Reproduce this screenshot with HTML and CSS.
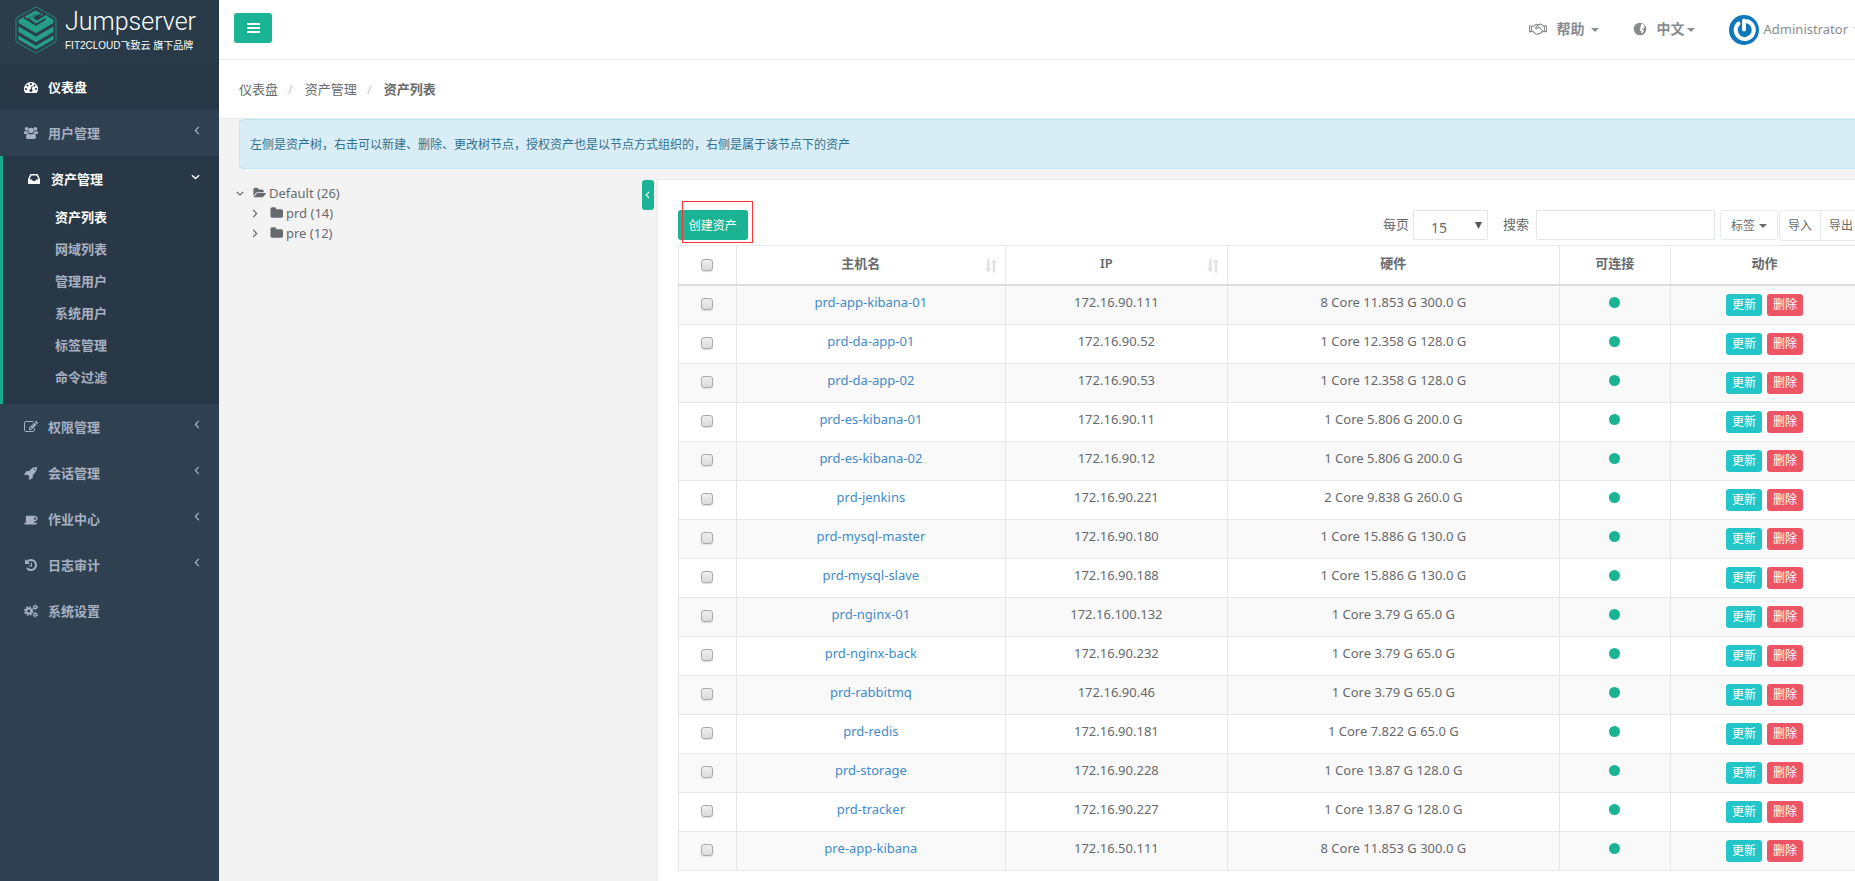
FILE: index.html
```html
<!DOCTYPE html>
<html lang="zh-CN">
<head>
<meta charset="utf-8">
<title>Jumpserver</title>
<link rel="stylesheet" href="styles.css">
</head>
<body>
<svg class="sprite" aria-hidden="true">
  <symbol id="i-dash" viewBox="0 0 1792 1792"><path d="M384 1152q0-53-37.500-90.500t-90.500-37.500-90.500 37.500-37.500 90.500 37.500 90.500 90.500 37.500 90.500-37.500 37.500-90.500zm192-448q0-53-37.500-90.500t-90.500-37.500-90.500 37.500-37.500 90.500 37.500 90.500 90.500 37.500 90.500-37.500 37.500-90.500zm428 481l101-382q6-26-7.500-48.500t-38.500-29.500-48 6.500-30 39.500l-101 382q-60 5-107 43.500t-63 98.500q-20 77 20 146t117 89 146-20 89-117q16-60-6-117t-72-91zm660-33q0-53-37.500-90.500t-90.500-37.500-90.500 37.500-37.500 90.500 37.500 90.500 90.500 37.500 90.500-37.500 37.500-90.500zm-640-640q0-53-37.500-90.500t-90.500-37.500-90.500 37.500-37.500 90.500 37.500 90.500 90.500 37.500 90.500-37.500 37.500-90.500zm448 192q0-53-37.500-90.500t-90.500-37.500-90.500 37.500-37.500 90.500 37.500 90.500 90.500 37.500 90.500-37.500 37.500-90.500zm320 448q0 261-141 483-19 29-54 29h-1402q-35 0-54-29-141-221-141-483 0-182 71-348t191-286 286-191 348-71 348 71 286 191 191 286 71 348z"/></symbol>
  <symbol id="i-users" viewBox="0 0 14 14"><circle cx="2.700" cy="2.800" r="1.900"/><circle cx="11.300" cy="2.800" r="1.900"/><circle cx="7" cy="4.400" r="2.700"/><path d="M0 7.200C0 5.600.7 5 1.400 5c.9.600 1.600.6 2.400.3.100 1 .4 1.500.7 1.900-.9 0-1.600.3-2.100.9H1.200C.4 8.100 0 7.700 0 7.200zM14 7.200c0-1.600-.7-2.200-1.400-2.200-.9.600-1.600.6-2.400.3-.1 1-.4 1.500-.7 1.900.9 0 1.600.3 2.100.9h1.200c.8 0 1.200-.4 1.200-.9zM2 11.200c0-2.500.8-3.800 2.400-3.800 1.700 1.200 3.500 1.200 5.200 0 1.600 0 2.400 1.300 2.400 3.800 0 1.200-.8 1.800-1.800 1.800H3.800C2.800 13 2 12.400 2 11.200z"/></symbol>
  <symbol id="i-inbox" viewBox="0 0 1536 1792"><path d="M1023 960h316q-1-3-2.500-8.500t-2.500-7.500l-212-496h-708l-212 496q-1 3-2.500 8.500t-2.500 7.500h316l95 192h320zm513 30v482q0 26-19 45t-45 19h-1408q-26 0-45-19t-19-45v-482q0-62 25-123l238-552q10-25 36.500-42t52.500-17h832q26 0 52.500 17t36.500 42l238 552q25 61 25 123z"/></symbol>
  <symbol id="i-edit" viewBox="0 0 1792 1792"><path d="M888 1184l116-116-152-152-116 116v56h96v96h56zm440-720q-16-16-33 1l-350 350q-17 17-1 33t33-1l350-350q17-17 1-33zm80 594v190q0 119-84.500 203.500t-203.500 84.500h-832q-119 0-203.500-84.500t-84.500-203.500v-832q0-119 84.500-203.500t203.500-84.500h832q63 0 117 25 15 7 18 23 3 17-9 29l-49 49q-14 14-32 8-23-6-45-6h-832q-66 0-113 47t-47 113v832q0 66 47 113t113 47h832q66 0 113-47t47-113v-126q0-13 9-22l64-64q15-15 35-7t20 29zm-96-738l288 288-672 672h-288v-288zm444 132l-92 92-288-288 92-92q28-28 68-28t68 28l152 152q28 28 28 68t-28 68z"/></symbol>
  <symbol id="i-rocket" viewBox="0 0 1792 1792"><path d="M1440 448q0-40-28-68t-68-28-68 28-28 68 28 68 68 28 68-28 28-68zm224-288q0 249-75.500 430.500t-253.500 360.500q-81 80-195 176l-20 379q-2 16-16 26l-384 224q-7 4-16 4-12 0-23-9l-64-64q-13-14-8-32l85-276-281-281-276 85q-3 1-9 1-14 0-23-9l-64-64q-17-19-5-39l224-384q10-14 26-16l379-20q96-114 176-195 188-187 358-258t431-71q14 0 24 9.500t10 22.500z"/></symbol>
  <symbol id="i-coffee" viewBox="0 0 1920 1792"><path d="M1664 832q0-80-56-136t-136-56h-64v384h64q80 0 136-56t56-136zm-1664 576h1792q0 106-75 181t-181 75h-1280q-106 0-181-75t-75-181zm1856-576q0 159-112.500 271.500t-271.500 112.500h-64v32q0 92-66 158t-158 66h-704q-92 0-158-66t-66-158v-736q0-26 19-45t45-19h1152q159 0 271.500 112.500t112.500 271.500z"/></symbol>
  <symbol id="i-history" viewBox="128 0 1536 1792"><path d="M1664 896q0 156-61 298t-164 245-245 164-298 61q-172 0-327-72.500t-264-204.500q-7-10-6.500-22.500t8.500-20.500l137-138q10-9 25-9 16 2 23 12 73 95 179 147t225 52q104 0 198.500-40.500t163.500-109.500 109.500-163.500 40.500-198.500-40.500-198.500-109.500-163.500-163.500-109.500-198.500-40.500q-98 0-188 35.500t-160 101.500l137 138q31 30 14 69-17 40-59 40h-448q-26 0-45-19t-19-45v-448q0-42 40-59 39-17 69 14l130 129q107-101 244.500-156.500t284.500-55.500q156 0 298 61t245 164 164 245 61 298zm-640-288v448q0 14-9 23t-23 9h-320q-14 0-23-9t-9-23v-64q0-14 9-23t23-9h224v-352q0-14 9-23t23-9h64q14 0 23 9t9 23z"/></symbol>
  <symbol id="i-cogs" viewBox="0 0 14 14"><g fill="none" stroke="currentColor"><circle cx="4.800" cy="7" r="2.600" stroke-width="2"/><circle cx="4.800" cy="7" r="4.100" stroke-width="1.400" stroke-dasharray="1.800 1.420"/><circle cx="11.300" cy="3.200" r="1.400" stroke-width="1.200"/><circle cx="11.300" cy="3.200" r="2.200" stroke-width=".9" stroke-dasharray="1.300 1"/><circle cx="11.300" cy="10.800" r="1.400" stroke-width="1.200"/><circle cx="11.300" cy="10.800" r="2.200" stroke-width=".9" stroke-dasharray="1.300 1"/></g></symbol>
  <symbol id="i-left" viewBox="0 0 6 10"><path d="M5 1 1.200 5 5 9" fill="none" stroke="currentColor" stroke-width="1.400"/></symbol>
  <symbol id="i-right" viewBox="0 0 6 10"><path d="M1 1l3.800 4L1 9" fill="none" stroke="currentColor" stroke-width="1.400"/></symbol>
  <symbol id="i-down" viewBox="0 0 10 6"><path d="M1 1l4 3.800L9 1" fill="none" stroke="currentColor" stroke-width="1.600"/></symbol>
  <symbol id="i-folder" viewBox="0 128 1728 1536"><path d="M1728 608v704q0 92-66 158t-158 66h-1216q-92 0-158-66t-66-158v-960q0-92 66-158t158-66h320q92 0 158 66t66 158v32h672q92 0 158 66t66 158z"/></symbol>
  <symbol id="i-open" viewBox="0 128 1943 1536"><path d="M1943 952q0 31-31 66l-336 396q-43 51-120.500 86.500t-143.500 35.500h-1088q-34 0-60.500-13t-26.500-43q0-31 31-66l336-396q43-51 120.500-86.500t143.500-35.500h1088q34 0 60.500 13t26.500 43zm-343-344v160h-832q-94 0-197 47.500t-164 119.500l-337 396-5 6q0-4-.5-12.500t-.5-12.500v-960q0-92 66-158t158-66h320q92 0 158 66t66 158v32h544q92 0 158 66t66 158z"/></symbol>
  <symbol id="i-sort" viewBox="0 0 12 14"><path d="M2 0h2.600v9.500h1.900L3.300 13.500 0 9.500h2zM7.600 13.500h2.600V4H12L8.900 0 5.800 4h1.800z"/></symbol>
  <symbol id="i-globe" viewBox="0 0 14 14"><circle cx="7" cy="7" r="6.300"/><path fill="#fff" d="M8.200 2.200l1.600-.4 1.800 1.600-.6 1.300.9 1-1.200.7-1.100-.2-.7 1 1.600.5.300 1.300-1.700 2.200-.9-.2-.2-1.800-1.300-1.500.6-1.600z"/></symbol>
  <symbol id="i-hand" viewBox="0 0 18 12"><g fill="none" stroke="currentColor" stroke-width="1.100"><path d="M.6 3h2v5.600h-2zM17.400 3h-2v5.600h2zM2.600 3.300l2.200-.2C6 1.500 7 1 8.300 1.400L9.500 2C11.500.6 13 1 14 2.900l1.400.3M2.600 8.300h1.200l3 2.600c1 .7 1.900.4 2.300-.3 1.100.6 1.900.2 2.200-.7 1 .2 1.700-.5 1.600-1.400l2.500-.2M9.500 2C8 2.700 7 3.800 6.500 5c.7 1.200 2 .8 3-.8l1.200.2 2.600 3.300c.3.500.2.900-.1 1.200"/></g></symbol>
</svg>
<div class="page">
  <nav class="sidebar">
    <div class="brand">
      <svg class="brand-mark" viewBox="0 0 42 48"><path d="M21 .8 41 12.300v23.400L21 47.200 1 35.700V12.300z" fill="none" stroke="#249c83" stroke-width=".8"/><g fill="#269d84"><path d="M20.500 4.500 28 8.300l-3 2.200-4.500-2.300-8 4.600 8.500 5 9-5.300-2.500-1.500 3.500-2L38.500 14v3L21 27.300 3.500 17v-3z"/><path d="M14 12.600l6.800-3.800 2.400 1.300-4 2.600 2.800 1.800 6-3.400 2.200 1.300L21 17.300z"/><path d="M3.500 20.500 21 30.600l17.500-10.100v5.600L21 36.200 3.500 26.100z"/><path d="M3.500 29.600 21 39.700l17.500-10.100v3.900L21 43.600 3.500 33.500z"/></g><path d="M9 11.500l12 7.200 9.500-5.600M18.500 12.200l7.500-4" fill="none" stroke="#293846" stroke-width="1.600"/></svg>
      <div class="brand-text"><span class="brand-name">Jumpserver</span><span class="brand-tag">FIT2CLOUD飞致云 旗下品牌</span></div>
    </div>
    <ul class="menu">
      <li class="landing"><a href="#"><svg class="mi"><use href="#i-dash"/></svg><span>仪表盘</span></a></li>
      <li><a href="#"><svg class="mi"><use href="#i-users"/></svg><span>用户管理</span><svg class="arrow"><use href="#i-left"/></svg></a></li>
      <li class="active"><a href="#"><svg class="mi"><use href="#i-inbox"/></svg><span>资产管理</span><svg class="arrow wide"><use href="#i-down"/></svg></a>
        <ul class="submenu">
          <li><a class="current" href="#">资产列表</a></li>
          <li><a href="#">网域列表</a></li>
          <li><a href="#">管理用户</a></li>
          <li><a href="#">系统用户</a></li>
          <li><a href="#">标签管理</a></li>
          <li><a href="#">命令过滤</a></li>
        </ul>
      </li>
      <li><a href="#"><svg class="mi"><use href="#i-edit"/></svg><span>权限管理</span><svg class="arrow"><use href="#i-left"/></svg></a></li>
      <li><a href="#"><svg class="mi"><use href="#i-rocket"/></svg><span>会话管理</span><svg class="arrow"><use href="#i-left"/></svg></a></li>
      <li><a href="#"><svg class="mi"><use href="#i-coffee"/></svg><span>作业中心</span><svg class="arrow"><use href="#i-left"/></svg></a></li>
      <li><a href="#"><svg class="mi"><use href="#i-history"/></svg><span>日志审计</span><svg class="arrow"><use href="#i-left"/></svg></a></li>
      <li><a href="#"><svg class="mi"><use href="#i-cogs"/></svg><span>系统设置</span></a></li>
    </ul>
  </nav>
  <div class="main">
    <header class="topbar">
      <button class="burger" type="button" aria-label="菜单"><svg viewBox="0 0 13 11"><path d="M0 0h13v2H0zM0 4h13v2H0zM0 8h13v2H0z"/></svg></button>
      <div class="top-links">
        <a class="help" href="#"><svg class="hand"><use href="#i-hand"/></svg><b>帮助</b><i class="caret"></i></a>
        <a class="lang" href="#"><svg class="globe"><use href="#i-globe"/></svg><b>中文</b><i class="caret"></i></a>
        <a class="user" href="#"><svg class="avatar" viewBox="0 0 30 30"><circle cx="15" cy="15" r="15" fill="#0f78bd"/><path d="M9.500 8.500a9 9 0 1 0 8.500-2.200" fill="none" stroke="#fff" stroke-width="4" stroke-linecap="round"/><path d="M15 5.500v9" stroke="#fff" stroke-width="4" stroke-linecap="round"/></svg><span>Administrator</span><i class="caret"></i></a>
      </div>
    </header>
    <ol class="crumbs"><li><a href="#">仪表盘</a></li><li><a href="#">资产管理</a></li><li><b>资产列表</b></li></ol>
    <div class="content">
      <div class="alert">左侧是资产树，右击可以新建、删除、更改树节点，授权资产也是以节点方式组织的，右侧是属于该节点下的资产</div>
      <div class="split">
        <div class="tree">
          <div class="node"><svg class="tw down"><use href="#i-down"/></svg><svg class="fo"><use href="#i-open"/></svg><span>Default (26)</span></div>
          <div class="node child"><svg class="tw"><use href="#i-right"/></svg><svg class="fo"><use href="#i-folder"/></svg><span>prd (14)</span></div>
          <div class="node child"><svg class="tw"><use href="#i-right"/></svg><svg class="fo"><use href="#i-folder"/></svg><span>pre (12)</span></div>
        </div>
        <button class="fold" type="button" aria-label="收起"><svg><use href="#i-left"/></svg></button>
        <section class="panel">
          <div class="tools">
            <div class="create-wrap"><button class="create" type="button">创建资产</button></div>
            <label class="per" for="per">每页</label>
            <select id="per"><option>15</option></select>
            <label class="find" for="find">搜索</label>
            <input id="find" type="text">
            <button class="plain tag" type="button">标签<i class="caret"></i></button>
            <div class="group"><button class="plain" type="button">导入</button><button class="plain" type="button">导出</button></div>
          </div>
          <table>
            <colgroup><col class="c1"><col class="c2"><col class="c3"><col class="c4"><col class="c5"><col class="c6"></colgroup>
            <thead><tr><th><input type="checkbox" aria-label="全选"></th><th><div class="sortable"><span>主机名</span><svg><use href="#i-sort"/></svg></div></th><th><div class="sortable"><span>IP</span><svg><use href="#i-sort"/></svg></div></th><th>硬件</th><th>可连接</th><th>动作</th></tr></thead>
            <tbody>
<tr><td><input type="checkbox" aria-label="选择"></td><td><a href="#">prd-app-kibana-01</a></td><td>172.16.90.111</td><td>8 Core 11.853 G 300.0 G</td><td><i class="dot"></i></td><td><div class="acts"><button class="upd" type="button">更新</button><button class="del" type="button">删除</button></div></td></tr>
<tr><td><input type="checkbox" aria-label="选择"></td><td><a href="#">prd-da-app-01</a></td><td>172.16.90.52</td><td>1 Core 12.358 G 128.0 G</td><td><i class="dot"></i></td><td><div class="acts"><button class="upd" type="button">更新</button><button class="del" type="button">删除</button></div></td></tr>
<tr><td><input type="checkbox" aria-label="选择"></td><td><a href="#">prd-da-app-02</a></td><td>172.16.90.53</td><td>1 Core 12.358 G 128.0 G</td><td><i class="dot"></i></td><td><div class="acts"><button class="upd" type="button">更新</button><button class="del" type="button">删除</button></div></td></tr>
<tr><td><input type="checkbox" aria-label="选择"></td><td><a href="#">prd-es-kibana-01</a></td><td>172.16.90.11</td><td>1 Core 5.806 G 200.0 G</td><td><i class="dot"></i></td><td><div class="acts"><button class="upd" type="button">更新</button><button class="del" type="button">删除</button></div></td></tr>
<tr><td><input type="checkbox" aria-label="选择"></td><td><a href="#">prd-es-kibana-02</a></td><td>172.16.90.12</td><td>1 Core 5.806 G 200.0 G</td><td><i class="dot"></i></td><td><div class="acts"><button class="upd" type="button">更新</button><button class="del" type="button">删除</button></div></td></tr>
<tr><td><input type="checkbox" aria-label="选择"></td><td><a href="#">prd-jenkins</a></td><td>172.16.90.221</td><td>2 Core 9.838 G 260.0 G</td><td><i class="dot"></i></td><td><div class="acts"><button class="upd" type="button">更新</button><button class="del" type="button">删除</button></div></td></tr>
<tr><td><input type="checkbox" aria-label="选择"></td><td><a href="#">prd-mysql-master</a></td><td>172.16.90.180</td><td>1 Core 15.886 G 130.0 G</td><td><i class="dot"></i></td><td><div class="acts"><button class="upd" type="button">更新</button><button class="del" type="button">删除</button></div></td></tr>
<tr><td><input type="checkbox" aria-label="选择"></td><td><a href="#">prd-mysql-slave</a></td><td>172.16.90.188</td><td>1 Core 15.886 G 130.0 G</td><td><i class="dot"></i></td><td><div class="acts"><button class="upd" type="button">更新</button><button class="del" type="button">删除</button></div></td></tr>
<tr><td><input type="checkbox" aria-label="选择"></td><td><a href="#">prd-nginx-01</a></td><td>172.16.100.132</td><td>1 Core 3.79 G 65.0 G</td><td><i class="dot"></i></td><td><div class="acts"><button class="upd" type="button">更新</button><button class="del" type="button">删除</button></div></td></tr>
<tr><td><input type="checkbox" aria-label="选择"></td><td><a href="#">prd-nginx-back</a></td><td>172.16.90.232</td><td>1 Core 3.79 G 65.0 G</td><td><i class="dot"></i></td><td><div class="acts"><button class="upd" type="button">更新</button><button class="del" type="button">删除</button></div></td></tr>
<tr><td><input type="checkbox" aria-label="选择"></td><td><a href="#">prd-rabbitmq</a></td><td>172.16.90.46</td><td>1 Core 3.79 G 65.0 G</td><td><i class="dot"></i></td><td><div class="acts"><button class="upd" type="button">更新</button><button class="del" type="button">删除</button></div></td></tr>
<tr><td><input type="checkbox" aria-label="选择"></td><td><a href="#">prd-redis</a></td><td>172.16.90.181</td><td>1 Core 7.822 G 65.0 G</td><td><i class="dot"></i></td><td><div class="acts"><button class="upd" type="button">更新</button><button class="del" type="button">删除</button></div></td></tr>
<tr><td><input type="checkbox" aria-label="选择"></td><td><a href="#">prd-storage</a></td><td>172.16.90.228</td><td>1 Core 13.87 G 128.0 G</td><td><i class="dot"></i></td><td><div class="acts"><button class="upd" type="button">更新</button><button class="del" type="button">删除</button></div></td></tr>
<tr><td><input type="checkbox" aria-label="选择"></td><td><a href="#">prd-tracker</a></td><td>172.16.90.227</td><td>1 Core 13.87 G 128.0 G</td><td><i class="dot"></i></td><td><div class="acts"><button class="upd" type="button">更新</button><button class="del" type="button">删除</button></div></td></tr>
<tr><td><input type="checkbox" aria-label="选择"></td><td><a href="#">pre-app-kibana</a></td><td>172.16.50.111</td><td>8 Core 11.853 G 300.0 G</td><td><i class="dot"></i></td><td><div class="acts"><button class="upd" type="button">更新</button><button class="del" type="button">删除</button></div></td></tr>
            </tbody>
          </table>
        </section>
      </div>
    </div>
  </div>
</div>
</body>
</html>
```
FILE: styles.css
```css
* { box-sizing: border-box; }
body {
  margin: 0;
  font: 13px/18px "Noto Sans", "Noto Sans CJK SC", sans-serif;
  color: #676a6c;
  background: #f3f3f4;
}
a { color: inherit; text-decoration: none; }
ul, ol { list-style: none; margin: 0; padding: 0; }
button, input, select { font: inherit; color: inherit; margin: 0; }
svg { fill: currentColor; flex: none; display: block; }
.sprite { position: absolute; width: 0; height: 0; }
.page { display: flex; min-height: 100vh; overflow: hidden; }

.sidebar { flex: none; width: 219px; background: #2f4050; color: #a7b1c2; font-weight: 600; }
.brand {
  display: flex; gap: 8px; height: 64px; padding: 6px 0 0 15px; color: #fff;
  background: linear-gradient(120deg, #2b3c4b 0 40%, #283a48 60% 100%);
}
.brand-mark { width: 42px; height: 48px; }
.brand-text { display: flex; flex-direction: column; white-space: nowrap; }
.brand-name { font: 300 25px/32px Roboto, sans-serif; }
.brand-tag { font: 400 10px/16px "Liberation Sans", "Noto Sans CJK SC", sans-serif; }
.menu > li > a { display: flex; align-items: center; height: 46px; padding: 0 19px 1px 24px; }
.mi { width: 14px; height: 14px; margin-right: 10px; }
.arrow { width: 6px; height: 9px; margin: 0 0 4px auto; }
.arrow.wide { width: 9px; height: 6px; }
.landing, .active { background: #293846; }
.landing > a, .active > a, .current { color: #fff; }
.menu > .active { border-left: 3px solid #19aa8d; }
.submenu { padding: 0 0 10px; }
.submenu a { display: block; padding: 6px 0 8px 52px; }

.main { flex: 1; display: flex; flex-direction: column; min-width: 0; margin-right: -45px; }
.topbar {
  display: flex; justify-content: space-between; align-items: flex-start;
  height: 60px; padding: 13px 38px 0 15px; background: #fff; border-bottom: 1px solid #e7eaec;
}
.burger { width: 38px; height: 30px; padding: 0 0 0 13px; border: 0; border-radius: 3px; background: #1ab394; color: #fff; }
.burger svg { width: 13px; height: 11px; }
.top-links { display: flex; font-size: 14px; color: #888b8e; }
.top-links a { display: flex; align-items: center; height: 34px; margin-top: -1px; }
.top-links b { font-weight: 600; }
.hand { width: 18px; height: 12px; margin-right: 10px; }
.globe { width: 14px; height: 14px; margin-right: 10px; }
.caret { width: 0; height: 0; border: 4px solid transparent; border-top-color: currentColor; border-bottom: 0; }
.help .caret { margin: 2px 0 0 6px; }
.lang { margin: 0 34px; }
.lang .caret { margin: 2px 0 0 2px; }
.avatar { width: 30px; height: 30px; margin: 2px 5px 0 0; }
.user { font-size: 13px; }
.user .caret { margin-left: 6px; }
.crumbs { display: flex; padding: 20px 20px; height: 59px; background: #fff; border-bottom: 1px solid #e7eaec; }
.crumbs li + li::before { content: "/"; color: #ccc; padding: 0 12px 0 10px; }
.crumbs b { font-weight: 600; }

.content { flex: 1; display: flex; flex-direction: column; padding: 0 20px 0 17px; }
.alert {
  margin: 0 0 10px 3px; padding: 16px 10px 14px; border: 1px solid #bce8f1; border-radius: 4px;
  background: #d9edf7; color: #31708f; font-size: 12px;
}
.split { flex: 1; display: flex; align-items: flex-start; }
.tree { flex: 1; min-width: 0; padding-top: 4px; }
.node { display: flex; align-items: center; height: 20px; }
.node.child { padding-left: 16px; }
.tw { width: 6px; height: 9px; margin-right: 12px; }
.tw.down { width: 8px; height: 5px; margin-right: 9px; }
.fo { width: 13px; height: 12px; margin-right: 3px; }
.fold { flex: none; width: 12px; height: 30px; margin: 1px 3px 0 0; padding: 0 3px; border: 0; border-radius: 3px; background: #1ab394; color: #fff; }
.fold svg { width: 5px; height: 8px; }
.panel { flex: none; align-self: stretch; width: 74.4%; padding: 30px 20px 11px; background: #fff; border: 1px solid #e7eaec; border-bottom: 0; }
.tools { display: flex; align-items: flex-start; height: 35px; margin-right: -3px; }
.create-wrap { position: relative; margin-right: auto; }
.create-wrap::after { content: ""; position: absolute; left: 4px; top: -9px; width: 69px; height: 40px; border: 1px solid #f33; }
.create { width: 70px; height: 30px; padding: 1px 0 0; border: 0; border-radius: 3px; background: #1ab394; color: #fff; font-size: 12px; }
.tools label { margin-top: 5px; }
.tools select {
  appearance: none; width: 75px; height: 30px; margin: 0 15px 0 4px; padding: 6px 17px 0; border: 1px solid #e5e6e7; border-radius: 1px; font-size: 14px;
  background: url("data:image/svg+xml,%3Csvg xmlns='http://www.w3.org/2000/svg' width='7' height='7'%3E%3Cpath d='M0 0h7L3.500 7z' fill='%23555'/%3E%3C/svg%3E") no-repeat 61px 11px, #fff;
}
#find { width: 179px; height: 30px; margin: 0 5px 0 7px; border: 1px solid #e5e6e7; border-radius: 1px; }
.plain { height: 31px; padding: 1px 7px 0; border: 1px solid #e7eaec; border-radius: 3px; background: #fff; font-size: 12px; }
.tag { display: flex; align-items: center; gap: 4px; height: 30px; padding: 1px 10px 0; margin-right: 1px; }
.group { display: flex; }
.group .plain { width: 42px; border-radius: 3px 0 0 3px; }
.group .plain + .plain { margin-left: -1px; border-radius: 0 3px 3px 0; }

table { width: 100%; table-layout: fixed; border-collapse: collapse; text-align: center; }
.c1 { width: 58px; }
.c2 { width: 269px; }
.c3 { width: 222px; }
.c4 { width: 332px; }
.c5 { width: 111px; }
th, td { border: 1px solid #e7e7e7; vertical-align: top; padding: 8px 0; }
td { padding: 7px 0 9px; }
th { font-weight: 600; padding: 8px 0 11px; border-bottom: 2px solid #ddd; }
tbody tr:nth-child(odd) { background: #f9f9f9; }
td a { color: #428bca; }
.sortable { display: flex; align-items: flex-start; padding: 0 8px 0 0; }
.sortable span { flex: 1; }
.sortable svg { width: 12px; height: 14px; margin-top: 5px; color: #e0e2e3; }
input[type="checkbox"] {
  appearance: none; width: 12px; height: 12px; display: block; margin: 5px auto 0; border: 1px solid #aaa; border-radius: 3px;
  background: linear-gradient(#eee, #dcdcdc); box-shadow: 0 1px 1px #ddd;
}
.dot { display: block; width: 11px; height: 11px; border-radius: 50%; margin: 4px auto 0; background: #1ab394; }
.acts { display: flex; justify-content: center; gap: 5px; padding-top: 1px; margin-bottom: -1px; }
.acts button { width: 36px; height: 22px; padding: 0; border: 0; border-radius: 3px; color: #fff; font-size: 12px; line-height: 22px; }
.upd { background: #23c6c8; }
.del { background: #ed5565; }
```
